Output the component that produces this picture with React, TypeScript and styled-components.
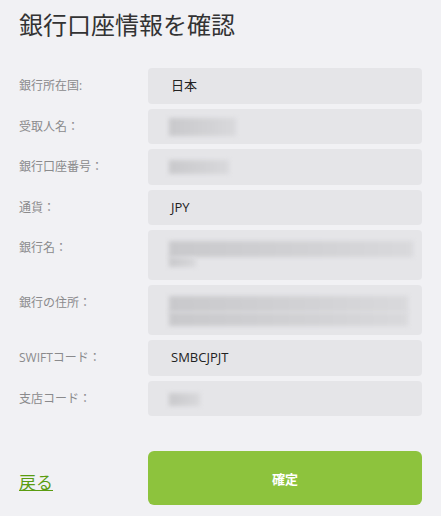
import React from 'react';
import styled, { createGlobalStyle } from "styled-components";

const GlobalStyle = createGlobalStyle`
  html, body {
    margin: 0;
    padding: 0;
    background-color: #f1f1f4;
    font-family: "Open Sans", "Noto Sans CJK JP", sans-serif;
  }
`;

const Page = styled.div`
  width: 441px;
  min-height: 516px;
  box-sizing: border-box;
  padding: 8px 19px 0 19px;
`;

const Title = styled.h1`
  margin: 0;
  font-size: 24px;
  font-weight: 400;
  line-height: 32px;
  color: #333333;
  font-family: "Noto Sans CJK JP", sans-serif;
`;

const Form = styled.div`
  display: grid;
  grid-template-columns: 129px 274px;
  row-gap: 5px;
  margin-top: 28px;
`;

const Label = styled.div`
  font-size: 12px;
  color: #8a8a8c;
  padding-top: 9px;
  line-height: 18px;
`;

const Value = styled.div<{ $tall?: boolean }>`
  box-sizing: border-box;
  min-height: ${(p) => (p.$tall ? "50px" : "35.5px")};
  padding: ${(p) => (p.$tall ? "11px 9px 0 21px" : "8px 23px")};
  background-color: #e5e5e8;
  border-radius: 4px;
  font-size: 13px;
  line-height: 19.5px;
  color: #222222;
`;

const Redacted = styled.div<{ $w: number; $h: number }>`
  width: ${(p) => p.$w}px;
  height: ${(p) => p.$h}px;
  background: linear-gradient(90deg, #c9c9cc, #d2d2d5 60%, #d9d9dc);
  filter: blur(2px);
`;

const TwoLine = styled.div`
  display: flex;
  flex-direction: column;
`;

const Footer = styled.div`
  display: grid;
  grid-template-columns: 129px 274px;
  align-items: center;
  margin-top: 35px;
`;

const BackLink = styled.a`
  font-size: 17px;
  color: #5a9c10;
  text-decoration: underline;
  cursor: pointer;
  width: fit-content;
  margin-top: 6px;
`;

const Confirm = styled.button`
  height: 54px;
  border: none;
  border-radius: 6px;
  background-color: #8dc33d;
  color: #ffffff;
  font-size: 13px;
  font-weight: 700;
  font-family: "Noto Sans CJK JP", sans-serif;
  cursor: pointer;
`;

function App() {
  return (
    <>
      <GlobalStyle />
      <Page>
        <Title>銀行口座情報を確認</Title>
        <Form>
          <Label>銀行所在国:</Label>
          <Value>日本</Value>

          <Label>受取人名：</Label>
          <Value><Redacted $w={67} $h={18} style={{ marginTop: 1, marginLeft: -2 }} /></Value>

          <Label>銀行口座番号：</Label>
          <Value><Redacted $w={60} $h={14} style={{ marginTop: 3, marginLeft: -2 }} /></Value>

          <Label>通貨：</Label>
          <Value>JPY</Value>

          <Label>銀行名：</Label>
          <Value $tall>
            <TwoLine>
              <Redacted $w={244} $h={16} />
              <Redacted $w={27} $h={10} />
            </TwoLine>
          </Value>

          <Label>銀行の住所：</Label>
          <Value $tall>
            <TwoLine>
              <Redacted $w={239} $h={16} />
              <Redacted $w={239} $h={14} />
            </TwoLine>
          </Value>

          <Label>SWIFTコード：</Label>
          <Value>SMBCJPJT</Value>

          <Label>支店コード：</Label>
          <Value><Redacted $w={31} $h={13} style={{ marginTop: 4, marginLeft: -2 }} /></Value>
        </Form>
        <Footer>
          <BackLink>戻る</BackLink>
          <Confirm>確定</Confirm>
        </Footer>
      </Page>
    </>
  );
}

export default App;
